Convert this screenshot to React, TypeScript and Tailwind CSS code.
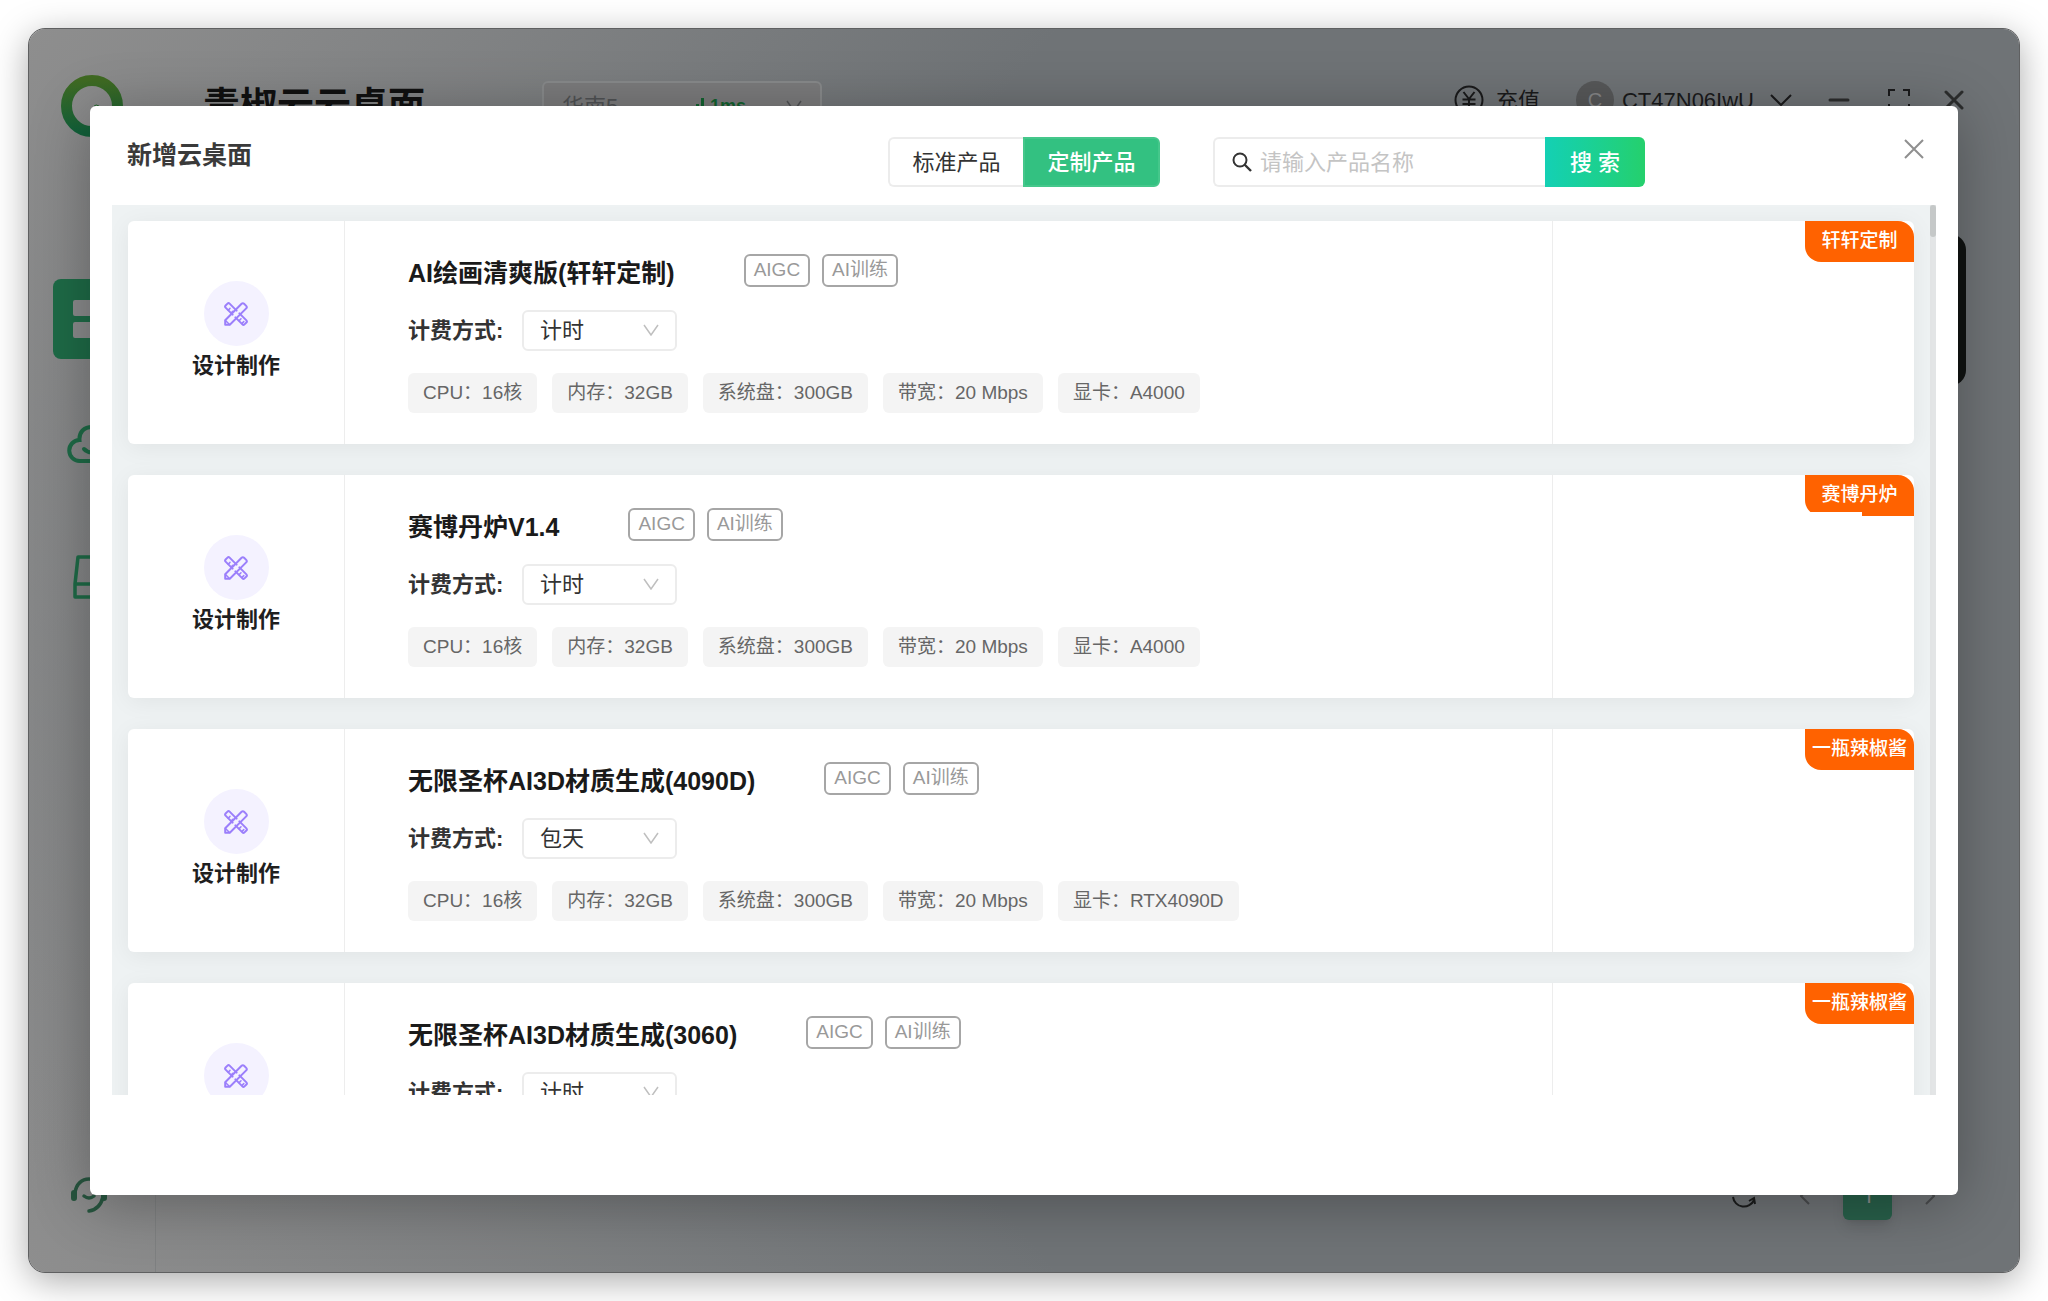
import React, { FC } from "react"

type ProductType = {
  id: number
  name: string
  owner: string
  billing: string
  gpu: string
  clipped?: boolean
}

const products: ProductType[] = [
  { id: 1, name: "AI绘画清爽版(轩轩定制)", owner: "轩轩定制", billing: "计时", gpu: "A4000" },
  { id: 2, name: "赛博丹炉V1.4", owner: "赛博丹炉", billing: "计时", gpu: "A4000", clipped: true },
  { id: 3, name: "无限圣杯AI3D材质生成(4090D)", owner: "一瓶辣椒酱", billing: "包天", gpu: "RTX4090D" },
  { id: 4, name: "无限圣杯AI3D材质生成(3060)", owner: "一瓶辣椒酱", billing: "计时", gpu: "RTX3060" },
]

const Chevron: FC<{ className: string }> = ({ className }) => (
  <svg viewBox="0 0 16 12" fill="none" stroke="currentColor" strokeWidth="1.5" className={className}>
    <path d="M1 1l7 10 7-10" />
  </svg>
)

const DesignIcon = () => (
  <svg viewBox="0 0 24 24" fill="none" stroke="#9b7ffb" strokeWidth="2" strokeLinejoin="round" strokeLinecap="round" className="size-6">
    <path d="M8.6 12.6L1.6 5.6a1.5 1.5 0 0 1 0-2.1l1.9-1.9a1.5 1.5 0 0 1 2.1 0l7 7" />
    <path d="M15.4 11.4l7 7a1.5 1.5 0 0 1 0 2.1l-1.9 1.9a1.5 1.5 0 0 1-2.1 0l-7-7" />
    <path d="M1.2 22.8v-4.6L17.6 1.8a1.8 1.8 0 0 1 2.5 0l2.1 2.1a1.8 1.8 0 0 1 0 2.5L5.8 22.8z" />
    <path d="M4.2 8.2l1.8-1.8M7 11l1.8-1.8M15.2 18.6l1.8-1.8M18 21.4l1.8-1.8M1.5 18.5l4 4" strokeWidth="1.5" />
  </svg>
)

const Header = () => (
  <header className="flex h-[142px] items-center pl-8 pr-[55px] text-[#1a1a1b]">
    <svg viewBox="0 0 62 62" fill="none" className="mt-3 size-[62px]">
      <defs>
        <linearGradient id="ring" x1="0" y1="0" x2="0" y2="1">
          <stop offset="0" stopColor="#3f6a22" />
          <stop offset="1" stopColor="#12613a" />
        </linearGradient>
      </defs>
      <circle cx="31" cy="31" r="25.5" stroke="url(#ring)" strokeWidth="11" />
      <path d="M33 31q2-2 5 0" stroke="#22652c" strokeWidth="1" />
    </svg>
    <h1 className="ml-20 mt-3 whitespace-nowrap text-[37px] font-bold leading-none text-[#111]">青椒云云桌面</h1>
    <div className="ml-[117px] mt-3 flex h-[50px] w-[280px] items-center rounded-md border-2 border-[#888a8b] bg-[#7b7b7c] px-[18px] text-[#505254]">
      <span className="text-[22px]">华南5</span>
      <svg viewBox="0 0 14 16" fill="#12622f" className="ml-auto size-4">
        <path d="M0 10h3v6H0zM5 6h3v10H5zM10 0h3v16h-3z" />
      </svg>
      <span className="ml-1 text-lg font-bold text-[#12622f]">1ms</span>
      <Chevron className="ml-10 h-3 w-4" />
    </div>
    <div className="ml-auto flex items-center">
      <button className="flex items-center gap-3 text-[22px]">
        <svg viewBox="0 0 30 30" fill="none" stroke="currentColor" strokeWidth="2" className="size-[30px]">
          <circle cx="15" cy="15" r="13.5" />
          <path d="M9.5 7l5.5 7 5.5-7M15 14v10M8.5 14.5h13M8.5 19h13" />
        </svg>
        充值
      </button>
      <span className="ml-9 flex size-[38px] items-center justify-center rounded-full bg-[#575859] text-xl text-[#858687]">C</span>
      <button className="ml-2 flex items-center gap-4 text-[22px]">
        CT47N06IwU
        <svg viewBox="0 0 22 12" fill="none" stroke="currentColor" strokeWidth="2" className="h-3 w-[22px]">
          <path d="M1 1l10 10L21 1" />
        </svg>
      </button>
      <button aria-label="最小化" className="ml-9">
        <svg viewBox="0 0 22 20" stroke="#2c2d2d" strokeWidth="3" strokeLinecap="round" className="h-5 w-[22px]">
          <path d="M2 10h18" />
        </svg>
      </button>
      <button aria-label="最大化" className="ml-[38px]">
        <svg viewBox="0 0 22 22" fill="none" stroke="currentColor" strokeWidth="2" className="size-[22px]">
          <path d="M1 7V1h6M15 1h6v6M21 15v6h-6M7 21H1v-6" />
        </svg>
      </button>
      <button aria-label="关闭窗口" className="ml-[34px]">
        <svg viewBox="0 0 20 20" stroke="#2c2d2d" strokeWidth="3" strokeLinecap="round" className="size-5">
          <path d="M2 2l16 16M18 2L2 18" />
        </svg>
      </button>
    </div>
  </header>
)

const Sidebar = () => (
  <nav className="flex w-[127px] flex-col border-r border-[#7e8081] pb-[59px] pl-6 pt-[108px] text-[#1e6b47]">
    <a href="#desktop" aria-label="云桌面" className="flex size-20 items-center rounded-lg bg-[#1e6b47] pl-5">
      <svg viewBox="0 0 46 38" fill="#8a8b8c" className="h-[38px] w-[46px]">
        <rect width="20" height="16" rx="2" />
        <rect x="26" width="20" height="16" rx="2" />
        <rect y="22" width="20" height="16" rx="2" />
        <rect x="26" y="22" width="20" height="16" rx="2" />
      </svg>
    </a>
    <a href="#cloud" aria-label="云盘" className="ml-[14px] mt-[66px]">
      <svg viewBox="0 0 50 38" fill="none" stroke="currentColor" strokeWidth="4" strokeLinecap="round" className="h-[38px] w-[50px]">
        <path d="M13 36a10.5 10.5 0 0 1-.5-21C12 7 17 2 25 2s13 5 13 13a10.500 10.500 0 0 1-1 21z" />
        <path d="M17 24c4 4 10 5 16 0" />
      </svg>
    </a>
    <a href="#disk" aria-label="磁盘" className="ml-[20px] mt-[92px]">
      <svg viewBox="0 0 44 44" fill="none" stroke="currentColor" strokeWidth="3.5" strokeLinejoin="round" className="size-11">
        <path d="M5 2h34l3 27v13H2V29zM2 29h40" />
      </svg>
    </a>
    <a href="#support" aria-label="客服" className="ml-[18px] mt-auto text-[#27553f]">
      <svg viewBox="0 0 36 36" fill="none" stroke="currentColor" strokeWidth="3.5" strokeLinecap="round" className="size-9">
        <path d="M4 16C5 7 11 2 18 2s13 5 14 14M32 20c-2 8-7 13-14 14M13 19q5 4 10 0" />
        <path d="M3 16v5M33 16v5" strokeWidth="6" />
      </svg>
    </a>
  </nav>
)

const Pager = () => (
  <div className="mb-[52px] mr-[84px] mt-auto flex items-center self-end text-[#4a4c4e]">
    <button aria-label="刷新">
      <svg viewBox="0 0 24 24" fill="none" stroke="#1b1c1c" strokeWidth="2" className="size-6">
        <path d="M1 13a11 11 0 0 0 21 3M17 17l5-3 1 6M23 9A11 11 0 0 0 2 8" />
      </svg>
    </button>
    <button aria-label="上一页" className="ml-11">
      <svg viewBox="0 0 10 18" fill="none" stroke="currentColor" strokeWidth="2" className="h-[18px] w-2.5">
        <path d="M9 1L1 9l8 8" />
      </svg>
    </button>
    <button className="mx-[33px] size-[49px] rounded-md bg-[#28604a] font-['Inter',sans-serif] text-[22px] text-[#8b8c8c] shadow-lg">1</button>
    <button aria-label="下一页">
      <svg viewBox="0 0 10 18" fill="none" stroke="currentColor" strokeWidth="2" className="h-[18px] w-2.5">
        <path d="M1 1l8 8-8 8" />
      </svg>
    </button>
  </div>
)

const ProductCard: FC<{ product: ProductType }> = ({ product }) => {
  const specs = ["CPU：16核", "内存：32GB", "系统盘：300GB", "带宽：20 Mbps", `显卡：${product.gpu}`]
  return (
    <li className="relative flex h-[223px] shrink-0 rounded-md bg-white shadow-[0_4px_24px_rgba(0,0,0,0.06)]">
      <div className="flex w-[217px] shrink-0 flex-col items-center justify-center gap-2 border-r border-[#ededed] pb-1.5">
        <div className="flex size-[65px] items-center justify-center rounded-full bg-[#f4f2ff]">
          <DesignIcon />
        </div>
        <div className="text-[22px] font-bold leading-6 text-[#1f1f1f]">设计制作</div>
      </div>
      <div className="flex min-w-0 flex-1 flex-col pl-[63px] pt-[33px]">
        <div className="flex h-[36px] gap-[69px]">
          <h3 className="whitespace-nowrap text-[25px] font-bold leading-[38px] text-[#1a1a1a]">{product.name}</h3>
          <div className="flex gap-3">
            {["AIGC", "AI训练"].map((tag) => (
              <span key={tag} className="flex h-[33px] items-center rounded-md border-2 border-[#a6a6a6] px-2 text-[19px] text-[#999]">
                {tag}
              </span>
            ))}
          </div>
        </div>
        <div className="mt-5 flex items-center gap-5 text-[22px] text-[#333]">
          <label htmlFor={`billing-${product.id}`} className="w-[94px] whitespace-nowrap font-bold">
            计费方式:
          </label>
          <div className="relative">
            <select
              id={`billing-${product.id}`}
              defaultValue={product.billing}
              className="h-[41px] w-[155px] appearance-none rounded-md border-2 border-[#ececec] bg-white pl-4"
            >
              <option>计时</option>
              <option>包天</option>
            </select>
            <Chevron className="pointer-events-none absolute right-[18px] top-[14px] h-3 w-4 text-[#bfbfbf]" />
          </div>
        </div>
        <ul className="mt-[22px] flex gap-[15px]">
          {specs.map((spec) => (
            <li key={spec} className="flex h-10 items-center whitespace-nowrap rounded-md bg-[#f4f4f4] px-[15px] text-[19px] text-[#666]">
              {spec}
            </li>
          ))}
        </ul>
      </div>
      <div className="w-[362px] shrink-0 border-l border-[#ededed]" />
      <div className="absolute right-0 top-0 flex h-[41px] w-[109px] items-center justify-center whitespace-nowrap rounded-bl-2xl rounded-tr-2xl bg-[#ff6200] text-[19px] font-medium text-white">
        {product.owner}
        {product.clipped && <span className="absolute bottom-0 left-0 h-1 w-[57px] bg-white" />}
      </div>
    </li>
  )
}

const ProductModal = () => (
  <div role="dialog" aria-labelledby="modal-title" className="absolute inset-x-[61px] bottom-[77px] top-[77px] flex flex-col rounded-md bg-white shadow-[0_8px_60px_rgba(0,0,0,0.3)]">
    <div className="flex h-[99px] shrink-0 items-start pl-[37px] pr-[34px] pt-[31px]">
      <h2 id="modal-title" className="flex-1 text-[25px] font-bold leading-9 text-[#3a3a3a]">
        新增云桌面
      </h2>
      <div className="flex text-[22px]">
        <button className="h-[50px] w-[135px] rounded-l-md border-2 border-r-0 border-[#ececec] text-[#333]">标准产品</button>
        <button className="h-[50px] w-[137px] rounded-r-md border-2 border-[#45c78b] bg-[#33c181] font-medium text-white">定制产品</button>
      </div>
      <form className="ml-[53px] flex text-[22px]">
        <label className="flex h-[50px] w-[332px] items-center gap-2 rounded-l-md border-2 border-r-0 border-[#ececec] pl-[17px]">
          <svg viewBox="0 0 20 20" fill="none" stroke="#333" strokeWidth="2" className="size-5 shrink-0">
            <circle cx="8" cy="8" r="6.5" />
            <path d="M12.5 12.5L19 19" strokeWidth="2.4" />
          </svg>
          <input type="text" aria-label="产品名称" placeholder="请输入产品名称" className="w-full outline-none placeholder:text-[#c4c4c4]" />
        </label>
        <button type="button" className="h-[50px] w-[100px] rounded-r-md bg-gradient-to-r from-[#14d0b4] to-[#25d06c] font-medium text-white">
          搜 索
        </button>
      </form>
      <div className="flex w-[279px] justify-end">
        <button aria-label="关闭" className="mt-0.5">
          <svg viewBox="0 0 20 20" stroke="#8f8f8f" strokeWidth="2" className="size-5">
            <path d="M1 1l18 18M19 1L1 19" />
          </svg>
        </button>
      </div>
    </div>
    <div className="mb-[100px] ml-[22px] mr-[22px] flex min-h-0 flex-1 overflow-hidden bg-[#eef2f3]">
      <ul className="flex flex-1 flex-col gap-[31px] px-4 pt-4">
        {products.map((product) => (
          <ProductCard key={product.id} product={product} />
        ))}
      </ul>
      <div className="w-1.5 bg-[#e3e5e6]">
        <div className="h-8 rounded-full bg-[#c5c8c8]" />
      </div>
    </div>
  </div>
)

const App = () => {
  return (
    <div className="h-screen bg-white p-[29px] font-['Liberation_Sans','Noto_Sans_CJK_SC',sans-serif]">
      <div className="relative flex h-full flex-col overflow-hidden rounded-2xl bg-[#6f7376] bg-[linear-gradient(130deg,#8e8e8e_0%,#8e8e8e00_34%),linear-gradient(50deg,#8e8e8e_0%,#8e8e8e00_34%)] shadow-[0_8px_36px_rgba(0,0,0,0.35)] outline outline-1 outline-[#5f6061]">
        <Header />
        <div className="flex flex-1">
          <Sidebar />
          <main className="flex flex-1 flex-col pt-[63px]">
            <div className="ml-10 mr-[53px] h-[152px] rounded-2xl bg-[#111312]" />
            <Pager />
          </main>
        </div>
        <ProductModal />
      </div>
    </div>
  )
}

export default App
